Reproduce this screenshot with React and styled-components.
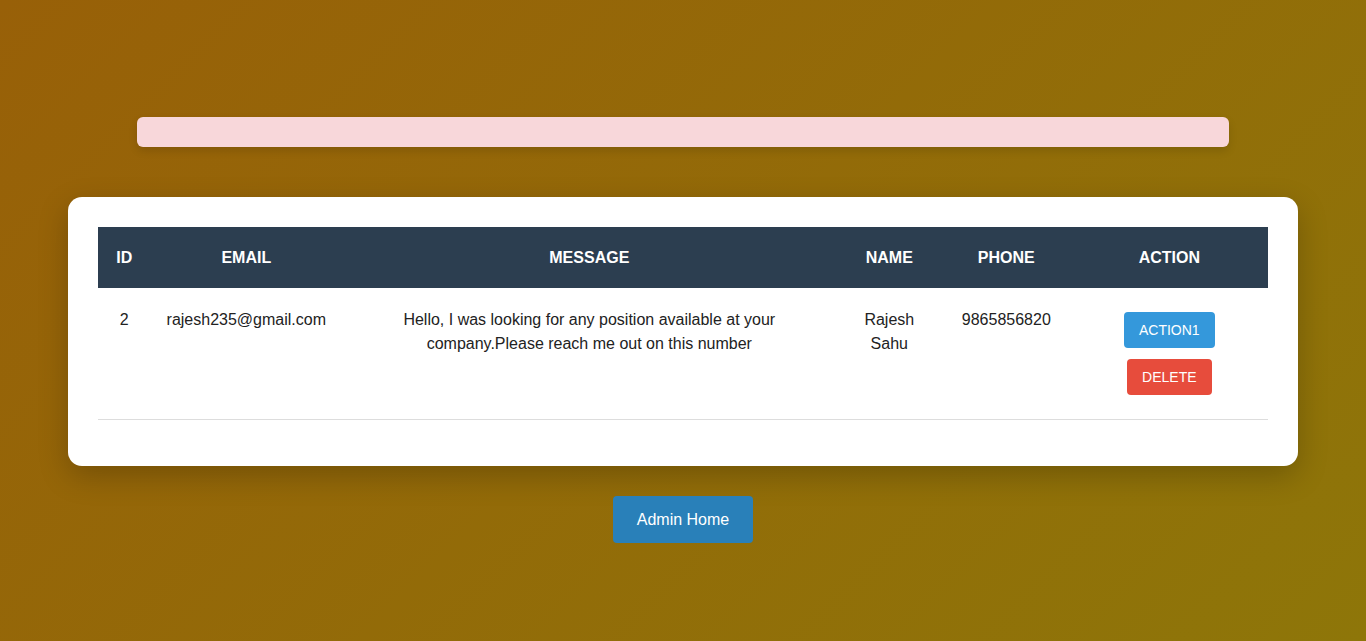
import React from "react";
import styled, { createGlobalStyle } from "styled-components";

const Global = createGlobalStyle`
  *, *::before, *::after { box-sizing: border-box; }
  html, body { margin: 0; padding: 0; }
  body {
    min-height: 641px;
    font-family: "Liberation Sans", Arial, sans-serif;
    background: linear-gradient(135deg, #986008 0%, #8e7609 100%);
    background-attachment: fixed;
  }
`;

const Page = styled.div`
  display: flex;
  flex-direction: column;
  align-items: center;
  padding-top: 117px;
  min-height: 641px;
`;

const Alert = styled.div`
  width: 80%;
  height: 30px;
  background: #f8d7da;
  border-radius: 6px;
  box-shadow: 0 4px 8px rgba(0, 0, 0, 0.12);
`;

const Card = styled.div`
  width: 90%;
  margin-top: 50px;
  background: #fff;
  border-radius: 14px;
  padding: 30px 30px 46px;
  box-shadow: 0 10px 30px rgba(0, 0, 0, 0.22);
`;

const Table = styled.table`
  width: 100%;
  border-collapse: collapse;
  table-layout: fixed;
`;

const Col = styled.col`
  width: ${(p) => p.$w}px;
`;

const Th = styled.th`
  background: #2c3e50;
  color: #fff;
  font-size: 16px;
  font-weight: bold;
  line-height: 21px;
  padding: 20px 15px;
  text-align: center;
`;

const Td = styled.td`
  color: #222;
  font-size: 16px;
  line-height: 24px;
  padding: 20px 15px 24px;
  text-align: center;
  vertical-align: top;
  border-bottom: 1px solid #ddd;
`;

const Actions = styled.div`
  display: flex;
  flex-direction: column;
  align-items: center;
  gap: 11px;
  padding-top: 4px;
`;

const SmallButton = styled.button`
  font-family: "Liberation Sans", Arial, sans-serif;
  font-size: 14px;
  line-height: 16px;
  padding: 10px 15px;
  border: none;
  border-radius: 4px;
  color: #fff;
  background: ${(p) => (p.$danger ? "#e74c3c" : "#3498db")};
  text-transform: uppercase;
  cursor: pointer;
`;

const HomeButton = styled.button`
  margin-top: 30px;
  font-family: "Liberation Sans", Arial, sans-serif;
  font-size: 16px;
  line-height: 19px;
  height: 47px;
  padding: 14px 20px;
  width: 140px;
  white-space: nowrap;
  border: none;
  border-radius: 4px;
  background: #2980b9;
  color: #fff;
  cursor: pointer;
`;

const columns = [
  ["ID", 52],
  ["EMAIL", 192],
  ["MESSAGE", 494],
  ["NAME", 106],
  ["PHONE", 128],
  ["ACTION", 198],
];

const rows = [
  {
    id: 2,
    email: "rajesh235@gmail.com",
    message:
      "Hello, I was looking for any position available at your company.Please reach me out on this number",
    name: "Rajesh Sahu",
    phone: "9865856820",
  },
];

export default function App() {
  return (
    <>
      <Global />
      <Page>
        <Alert />
        <Card>
          <Table>
            <colgroup>
              {columns.map(([label, w]) => (
                <Col key={label} $w={w} />
              ))}
            </colgroup>
            <thead>
              <tr>
                {columns.map(([label]) => (
                  <Th key={label}>{label}</Th>
                ))}
              </tr>
            </thead>
            <tbody>
              {rows.map((r) => (
                <tr key={r.id}>
                  <Td>{r.id}</Td>
                  <Td>{r.email}</Td>
                  <Td>{r.message}</Td>
                  <Td>{r.name}</Td>
                  <Td>{r.phone}</Td>
                  <Td>
                    <Actions>
                      <SmallButton>Action1</SmallButton>
                      <SmallButton $danger>Delete</SmallButton>
                    </Actions>
                  </Td>
                </tr>
              ))}
            </tbody>
          </Table>
        </Card>
        <HomeButton>Admin Home</HomeButton>
      </Page>
    </>
  );
}
